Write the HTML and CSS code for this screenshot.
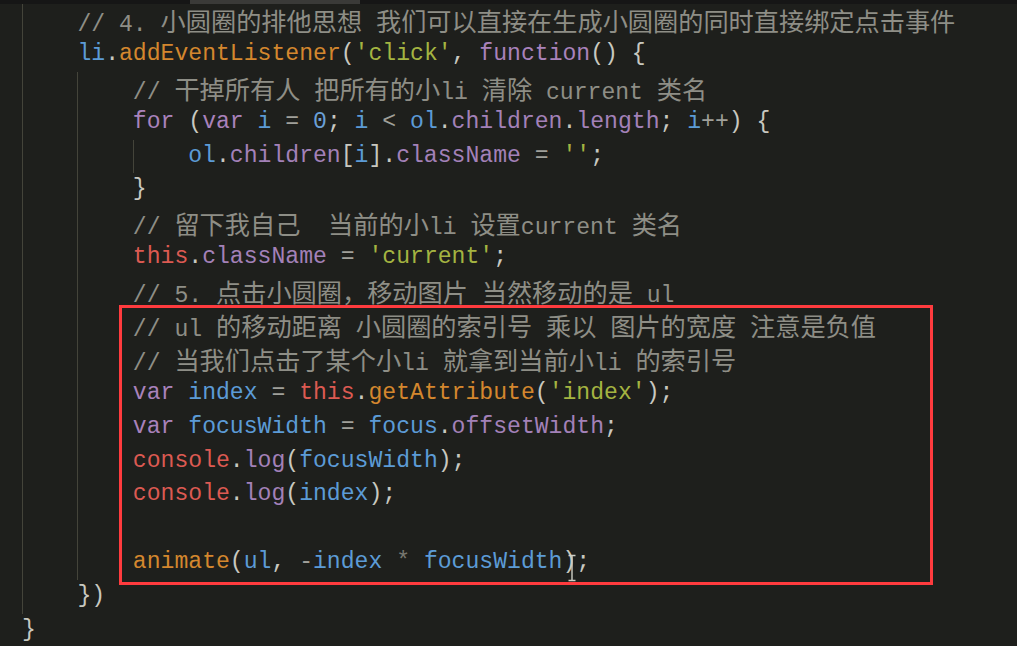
FILE: index.html
```html
<!DOCTYPE html>
<html lang="zh">
<head>
<meta charset="utf-8">
<title>code</title>
<link rel="stylesheet" href="styles.css">
</head>
<body>
<div class="editor">
  <div class="hscroll"><div class="thumb"></div></div>
  <div class="code">
    <div class="ln"><span class="g"></span><span class="c">// 4. <span class="zh">小圆圈的排他思想</span> <span class="zh">我们可以直接在生成小圆圈的同时直接绑定点击事件</span></span></div>
    <div class="ln"><span class="g"></span><span class="v">li</span>.<span class="f">addEventListener</span>(<span class="s">'click'</span>, <span class="k">function</span>() {</div>
    <div class="ln"><span class="g"></span><span class="g"></span><span class="c">// <span class="zh">干掉所有人</span> <span class="zh">把所有的小</span>li <span class="zh">清除</span> current <span class="zh">类名</span></span></div>
    <div class="ln"><span class="g"></span><span class="g"></span><span class="k">for</span> (<span class="k">var</span> <span class="v">i</span> <span class="o">=</span> <span class="n">0</span>; <span class="v">i</span> <span class="o">&lt;</span> <span class="v">ol</span>.<span class="pr">children</span>.<span class="pr">length</span>; <span class="v">i</span><span class="o">++</span>) {</div>
    <div class="ln"><span class="g"></span><span class="g"></span><span class="g"></span><span class="v">ol</span>.<span class="pr">children</span>[<span class="v">i</span>].<span class="pr">className</span> <span class="o">=</span> <span class="s">''</span>;</div>
    <div class="ln"><span class="g"></span><span class="g"></span>}</div>
    <div class="ln"><span class="g"></span><span class="g"></span><span class="c">// <span class="zh">留下我自己</span>  <span class="zh">当前的小</span>li <span class="zh">设置</span>current <span class="zh">类名</span></span></div>
    <div class="ln"><span class="g"></span><span class="g"></span><span class="t">this</span>.<span class="pr">className</span> <span class="o">=</span> <span class="s">'current'</span>;</div>
    <div class="ln"><span class="g"></span><span class="g"></span><span class="c">// 5. <span class="zh">点击小圆圈，移动图片</span> <span class="zh">当然移动的是</span> ul</span></div>
    <div class="hl">
      <div class="ln"><span class="g"></span><span class="g"></span><span class="c">// ul <span class="zh">的移动距离</span> <span class="zh">小圆圈的索引号</span> <span class="zh">乘以</span> <span class="zh">图片的宽度</span> <span class="zh">注意是负值</span></span></div>
      <div class="ln"><span class="g"></span><span class="g"></span><span class="c">// <span class="zh">当我们点击了某个小</span>li <span class="zh">就拿到当前小</span>li <span class="zh">的索引号</span></span></div>
      <div class="ln"><span class="g"></span><span class="g"></span><span class="k">var</span> <span class="v">index</span> <span class="o">=</span> <span class="t">this</span>.<span class="f">getAttribute</span>(<span class="s">'index'</span>);</div>
      <div class="ln"><span class="g"></span><span class="g"></span><span class="k">var</span> <span class="v">focusWidth</span> <span class="o">=</span> <span class="v">focus</span>.<span class="pr">offsetWidth</span>;</div>
      <div class="ln"><span class="g"></span><span class="g"></span><span class="t">console</span>.<span class="pr">log</span>(<span class="v">focusWidth</span>);</div>
      <div class="ln"><span class="g"></span><span class="g"></span><span class="t">console</span>.<span class="pr">log</span>(<span class="v">index</span>);</div>
      <div class="ln"><span class="g"></span><span class="g"></span></div>
      <div class="ln"><span class="g"></span><span class="g"></span><span class="f">animate</span>(<span class="v">ul</span>, <span class="o">-</span><span class="v">index</span> <span class="m">*</span> <span class="v">focusWidth</span>);</div>
    </div>
    <div class="ln"><span class="g"></span>})</div>
    <div class="ln">}</div>
  </div>
  <svg class="cursor" width="10" height="28" viewBox="0 0 10 28"><path d="M1.5 1.5 H8.5 M5 1.5 V26.5 M1.5 26.5 H8.5" stroke="#cfcfc6" stroke-width="1.4" fill="none"/></svg>
</div>
</body>
</html>
```

FILE: styles.css
```css
html, body {
  margin: 0;
  padding: 0;
  background: #1e1f1c;
}
body {
  width: 1017px;
  height: 646px;
  overflow: hidden;
}
.editor {
  position: relative;
  height: 646px;
  background: #1e1f1c;
  font-family: "Liberation Mono", "Noto Sans CJK SC", monospace;
  font-size: 23.1px;
  color: #c8c8c0;
}
.hscroll {
  height: 4px;
  background: #161616;
  display: flex;
}
.thumb {
  margin-left: 190px;
  width: 170px;
  background: #3a3a38;
}
.code {
  padding-left: 22px;
  margin-top: 0;
}
.ln {
  height: 33.9px;
  line-height: 33.9px;
  white-space: pre;
}
.g {
  display: inline-block;
  width: 4ch;
  height: 33.9px;
  vertical-align: top;
  border-left: 1px solid #44443a;
  box-sizing: border-box;
}
.zh {
  font-family: "Noto Sans CJK SC", sans-serif;
  font-size: 25.2px;
}
.c { color: #8e8e86; }
.v { color: #5c9bd6; }
.f { color: #d4872e; }
.s { color: #a4b441; }
.k { color: #a982bb; }
.pr { color: #a381b8; }
.t { color: #dc5a52; }
.o { color: #a0a09a; }
.n { color: #6a9fd6; }
.m { color: #77776f; }
.hl {
  position: relative;
}
.hl::after {
  content: "";
  position: absolute;
  left: 97px;
  width: 814px;
  top: -4px;
  bottom: -5px;
  border: 3px solid #ff3b3e;
  box-sizing: border-box;
  pointer-events: none;
}
.cursor {
  position: absolute;
  left: 567px;
  top: 554px;
}
```
